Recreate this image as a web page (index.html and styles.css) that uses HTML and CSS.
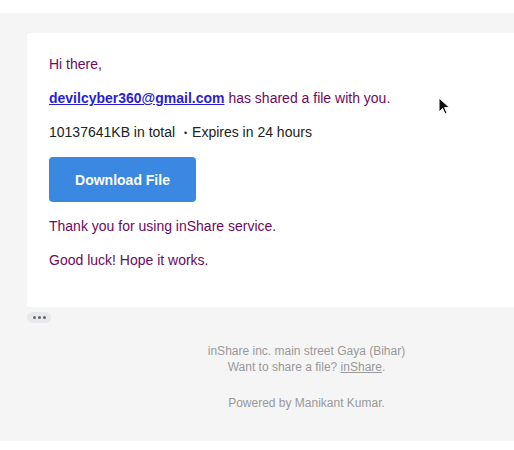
FILE: index.html
```html
<!DOCTYPE html>
<html>
<head>
<meta charset="utf-8">
<link rel="stylesheet" href="styles.css">
</head>
<body>
<div class="top"></div>
<div class="wrap">
  <div class="inner">
    <div class="card">
      <p class="purple">Hi there,</p>
      <p class="purple"><a class="mail" href="#">devilcyber360@gmail.com</a> has shared a file with you.</p>
      <p class="info">10137641KB in total <span class="dot">•</span> Expires in 24 hours</p>
      <a class="btn" href="#">Download File</a>
      <p class="purple">Thank you for using inShare service.</p>
      <p class="purple last">Good luck! Hope it works.</p>
    </div>
    <div class="more"><i></i><i></i><i></i></div>
    <div class="footer">
      <div>inShare inc. main street Gaya (Bihar)</div>
      <div>Want to share a file? <a href="#">inShare</a>.</div>
      <div class="powered">Powered by Manikant Kumar.</div>
    </div>
  </div>
</div>
<svg class="cursor" width="14" height="20" viewBox="0 0 14 20"><path d="M1 1 L1 15 L4.5 11.5 L7 17 L9 16 L6.6 10.6 L11.5 10.6 Z" fill="#111" stroke="#fff" stroke-width="1"/></svg>
</body>
</html>
```
FILE: styles.css
```css
html, body { margin: 0; padding: 0; }
body {
  width: 514px;
  height: 450px;
  overflow: hidden;
  background: #fff;
  font-family: "Liberation Sans", Arial, sans-serif;
  position: relative;
}
.top { height: 13px; }
.wrap {
  background: #f5f5f5;
  height: 428px;
  padding: 20px 0 0 27px;
  box-sizing: border-box;
  width: 514px;
  overflow: hidden;
}
.inner { width: 559px; }
.card {
  background: #fff;
  border-radius: 3px 0 0 3px;
  padding: 22px 22px 22px 22px;
}
.card p {
  margin: 0 0 16px 0;
  font-size: 14px;
  line-height: 18px;
}
.card p.info { margin-bottom: 15px; }
.purple { color: #6c0a62; }
.mail { color: #2a1ed4; font-weight: bold; text-decoration: underline; }
.info { color: #222; }
.dot { font-size: 9px; margin: 0 1px 0 5px; vertical-align: 1px; }
.btn {
  display: flex;
  align-items: center;
  justify-content: center;
  width: 147px;
  height: 45px;
  background: #3a88e1;
  border-radius: 4px;
  color: #fff;
  font-weight: bold;
  font-size: 14px;
  text-decoration: none;
  margin-bottom: 15px;
}
.more {
  margin-top: 5px;
  width: 24px;
  height: 11px;
  border-radius: 6px;
  background: #e8e9ec;
  display: flex;
  align-items: center;
  justify-content: center;
  gap: 2px;
}
.more i {
  width: 3px; height: 3px; border-radius: 50%; background: #666;
}
.footer {
  margin-top: 20px;
  text-align: center;
  font-size: 12px;
  line-height: 16px;
  color: #999;
}
.footer a { color: #999; text-decoration: underline; }
.powered { margin-top: 20px; }
.cursor { position: absolute; left: 438px; top: 97px; }
```
